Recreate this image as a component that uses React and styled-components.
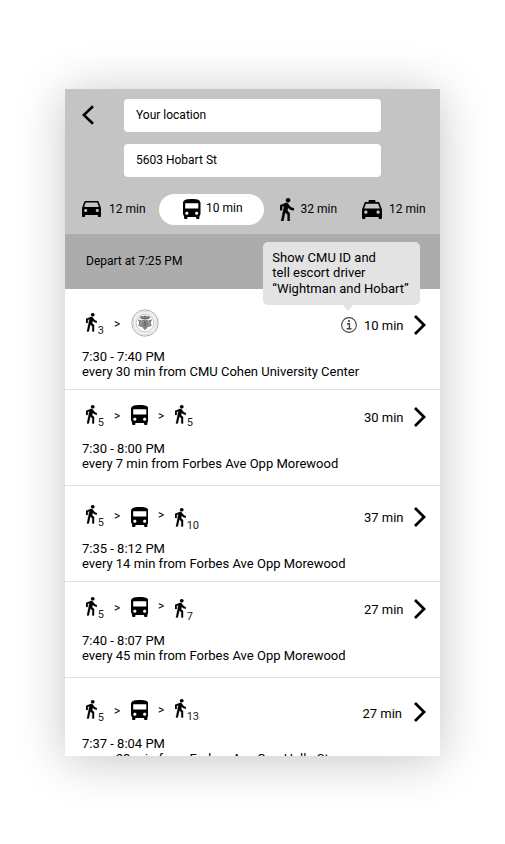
import React from "react";
import styled, { createGlobalStyle } from "styled-components";

const Global = createGlobalStyle`
  *, *::before, *::after { box-sizing: border-box; }
  body { margin: 0; background: #fff; font-family: Roboto, "Liberation Sans", sans-serif; color: #000; }
`;

const Stage = styled.div`
  width: 505px;
  height: 844px;
  padding: 89px 65px 88px;
  overflow: hidden;
`;

const Phone = styled.main`
  width: 375px;
  height: 667px;
  background: #fff;
  box-shadow: 0 4px 46px rgba(0, 0, 0, 0.23);
  overflow: hidden;
`;

const Header = styled.header`
  height: 145px;
  background: #c4c4c4;
`;

const SearchArea = styled.div`
  display: flex;
  align-items: flex-start;
  height: 105px;
  padding-top: 10px;
`;

const BackButton = styled.button`
  display: flex;
  width: 59px;
  padding: 6px 0 0 17px;
  border: 0;
  background: none;
`;

const Fields = styled.div`
  display: flex;
  flex-direction: column;
  gap: 12px;
`;

const Field = styled.div`
  width: 257px;
  height: 33px;
  padding-left: 12px;
  border-radius: 4px;
  background: #fff;
  font-size: 12px;
  line-height: 32px;
`;

const Modes = styled.nav`
  display: flex;
  align-items: flex-start;
`;

const Mode = styled.div`
  display: flex;
  align-items: center;
  flex: none;
  width: ${(p) => p.$width}px;
  height: 31px;
  padding: 0 0 ${(p) => p.$lift || 0}px ${(p) => p.$pad}px;
  gap: ${(p) => p.$gap}px;
  border-radius: 16px;
  background: ${(p) => (p.$active ? "#fff" : "transparent")};
  font-size: 12px;
  line-height: ${(p) => (p.$active ? 28 : 30)}px;
  white-space: nowrap;

  span { align-self: flex-start; }
`;

const DepartBar = styled.section`
  display: flex;
  height: 55px;
  padding-left: 21px;
  background: #acacac;
  font-size: 12px;
  line-height: 54px;
`;

const Routes = styled.ul`
  margin: 0;
  padding: 0;
  list-style: none;
`;

const Route = styled.li`
  height: ${(p) => p.$height}px;
  border-bottom: 1px solid #e0e0e0;
`;

const Summary = styled.div`
  display: flex;
  justify-content: space-between;
  height: ${(p) => p.$height}px;
  padding: 0 13px 0 20.5px;
`;

const Group = styled.div`
  display: flex;
  align-items: flex-start;
`;

const Slot = styled.div`
  display: flex;
  align-items: flex-start;
  flex: none;
  width: ${(p) => p.$width}px;
  margin-top: ${(p) => p.$top}px;
`;

const Minutes = styled.sub`
  margin: 11px 0 0 0.5px;
  color: #222;
  font-size: 11px;
  line-height: 13px;
  vertical-align: baseline;
`;

const Arrow = styled.span`
  padding-left: 0.6px;
  font-size: 12px;
  line-height: 13px;
`;

const Duration = styled.span`
  margin: ${(p) => p.$top}px ${(p) => p.$right}px 0 0;
  font-size: 13px;
  line-height: 15px;
`;

const Details = styled.p`
  margin: 0 0 0 17px;
  font-size: 13px;
  line-height: 15px;
  white-space: nowrap;
`;

const InfoAnchor = styled.div`
  position: relative;
  width: 16px;
  height: 16px;
  margin: 28px 6.6px 0 0;
`;

const Tooltip = styled.div`
  position: absolute;
  right: -63px;
  bottom: 28px;
  width: 157px;
  height: 63px;
  padding: 8px 0 0 9px;
  border-radius: 5px;
  background: #e3e3e3;
  font-size: 13px;
  line-height: 15.4px;
  white-space: nowrap;

  &::after {
    content: "";
    position: absolute;
    left: 80px;
    top: 100%;
    border: solid transparent;
    border-width: 6px 5px 0;
    border-top-color: #e3e3e3;
  }
`;

const Svg = styled.svg`
  display: block;
  flex: none;
`;

const CarIcon = () => (
  <Svg width="19" height="16" viewBox="3 5 18 16" preserveAspectRatio="none">
    <path d="M18.92 6.01C18.72 5.42 18.16 5 17.5 5h-11c-.66 0-1.21.42-1.42 1.01L3 12v8c0 .55.45 1 1 1h1c.55 0 1-.45 1-1v-1h12v1c0 .55.45 1 1 1h1c.55 0 1-.45 1-1v-8l-2.08-5.99zM6.5 16c-.83 0-1.5-.67-1.5-1.5S5.67 13 6.5 13s1.5.67 1.5 1.5S7.33 16 6.5 16zm11 0c-.83 0-1.5-.67-1.5-1.5s.67-1.5 1.5-1.5 1.5.67 1.5 1.5-.67 1.5-1.5 1.5zM5 11l1.5-4.5h11L19 11H5z" />
  </Svg>
);

const TaxiIcon = () => (
  <Svg width="20" height="19" viewBox="3 3 18 18" preserveAspectRatio="none">
    <path d="M18.92 6.01C18.72 5.42 18.16 5 17.5 5H15V3H9v2H6.5c-.66 0-1.21.42-1.42 1.01L3 12v8c0 .55.45 1 1 1h1c.55 0 1-.45 1-1v-1h12v1c0 .55.45 1 1 1h1c.55 0 1-.45 1-1v-8l-2.08-5.99zM6.5 16c-.83 0-1.5-.67-1.5-1.5S5.67 13 6.5 13s1.5.67 1.5 1.5S7.33 16 6.5 16zm11 0c-.83 0-1.5-.67-1.5-1.5s.67-1.5 1.5-1.5 1.5.67 1.5 1.5-.67 1.5-1.5 1.5zM5 11l1.5-4.5h11L19 11H5z" />
  </Svg>
);

const BusIcon = () => (
  <Svg width="17.5" height="20" viewBox="4 2 16 19" preserveAspectRatio="none">
    <path d="M4 16c0 .88.39 1.67 1 2.22V20c0 .55.45 1 1 1h1c.55 0 1-.45 1-1v-1h8v1c0 .55.45 1 1 1h1c.55 0 1-.45 1-1v-1.78c.61-.55 1-1.34 1-2.22V6c0-3.5-3.58-4-8-4s-8 .5-8 4v10zm3.5 1c-.83 0-1.5-.67-1.5-1.5S6.67 14 7.5 14s1.5.67 1.5 1.5S8.33 17 7.5 17zm9 0c-.83 0-1.5-.67-1.5-1.5s.67-1.5 1.5-1.5 1.5.67 1.5 1.5-.67 1.5-1.5 1.5zm1.5-6H6V6h12v5z" />
  </Svg>
);

const WalkIcon = ({ width = 11.7, height = 18.5 }) => (
  <Svg width={width} height={height} viewBox="6 1.5 13 21.5" preserveAspectRatio="none" stroke="#000" strokeWidth=".25">
    <path d="M13.5 5.5c1.1 0 2-.9 2-2s-.9-2-2-2-2 .9-2 2 .9 2 2 2zM9.8 8.9L7 23h2.1l1.8-8 2.1 2v6h2v-7.5l-2.1-2 .6-3C14.8 12 16.8 13 19 13v-2c-1.9 0-3.5-1-4.3-2.4l-1-1.6c-.4-.6-1-1-1.7-1-.3 0-.5.1-.8.1L6 8.3V13h2V9.6l1.8-.7" />
  </Svg>
);

const ChevronIcon = ({ back }) => (
  <Svg width="12" height="20" viewBox="0 0 12 20" fill="none" stroke="#000" strokeWidth={back ? 2.6 : 2.8}>
    <path d={back ? "M11 1.2L1.8 10L11 18.8" : "M1 1L10 10L1 19"} />
  </Svg>
);

const InfoIcon = () => (
  <Svg width="16" height="16" viewBox="0 0 16 16" fill="none" stroke="#444">
    <circle cx="8" cy="8" r="7.4" strokeWidth="1.1" />
    <path d="M6 6.8H8.4V11.6M5.7 11.8H10.5" strokeWidth="1.4" />
    <circle cx="8" cy="4.1" r="1.1" fill="#444" stroke="none" />
  </Svg>
);

const SealIcon = () => (
  <Svg width="28" height="28" viewBox="0 0 28 28" fill="none" stroke="#999">
    <circle cx="14" cy="14" r="13.2" strokeWidth=".8" />
    <circle cx="14" cy="14" r="11.8" strokeWidth=".35" />
    <circle cx="14" cy="14" r="10.4" strokeWidth=".9" strokeDasharray="1.2 1.1" stroke="#ccc" />
    <circle cx="14" cy="14" r="9" strokeWidth=".6" />
    <path d="M8.8 8.6L10.4 7L12.2 7.8L14 6.6L15.8 7.8L17.6 7L19.2 8.6L17.4 10H10.6Z" fill="#777" stroke="#555" strokeWidth=".4" />
    <path d="M7.6 10.8L10.4 12L14 10.8L17.6 12L20.4 10.8L19.2 14L20.2 16.6L16.8 17.4L14 20.8L11.2 17.4L7.8 16.6L8.8 14Z" fill="#999" stroke="#666" strokeWidth=".8" />
    <path d="M10.6 15.4L14 12.8L17.4 15.4M14 12V19M11.8 17L14 15.4L16.2 17" stroke="#555" strokeWidth=".8" />
  </Svg>
);

const routes = [
  {
    height: 101, textTop: 60, walk: [24, 3], arrow: 29,
    duration: "10 min", durationTop: 29, durationRight: 10.5, chevron: 26,
    time: "7:30 - 7:40 PM", line: "every 30 min from CMU Cohen University Center", escort: true,
  },
  {
    height: 96, textTop: 51, walk: [15, 5], arrow: 20, bus: 15, arrow2: 20, walk2: [15, 5],
    duration: "30 min", durationTop: 20, durationRight: 10.5, chevron: 17,
    time: "7:30 - 8:00 PM", line: "every 7 min from Forbes Ave Opp Morewood",
  },
  {
    height: 96, textTop: 55, walk: [19, 5], arrow: 24, bus: 21, arrow2: 23, walk2: [22, 10],
    duration: "37 min", durationTop: 24, durationRight: 10.5, chevron: 21,
    time: "7:35 - 8:12 PM", line: "every 14 min from Forbes Ave Opp Morewood",
  },
  {
    height: 96, textTop: 51, walk: [15, 5], arrow: 20, bus: 15, arrow2: 18, walk2: [17, 7],
    duration: "27 min", durationTop: 20, durationRight: 10.5, chevron: 17,
    time: "7:40 - 8:07 PM", line: "every 45 min from Forbes Ave Opp Morewood",
  },
  {
    height: 96, textTop: 58, walk: [22, 5], arrow: 27, bus: 22, arrow2: 26, walk2: [21, 13],
    duration: "27 min", durationTop: 28, durationRight: 12, chevron: 24,
    time: "7:37 - 8:04 PM", line: "every 23 min from Forbes Ave Opp Halla St",
  },
];

const WalkStep = ({ top, minutes, width }) => (
  <Slot $top={top} $width={width}>
    <WalkIcon />
    <Minutes>{minutes}</Minutes>
  </Slot>
);

const RouteItem = ({ route: r }) => (
  <Route $height={r.height}>
    <Summary $height={r.textTop}>
      <Group>
        <WalkStep top={r.walk[0]} minutes={r.walk[1]} width={28} />
        <Slot $top={r.arrow} $width={17}><Arrow>&gt;</Arrow></Slot>
        {r.escort ? (
          <Slot $top={19.7} $width={28}><SealIcon /></Slot>
        ) : (
          <>
            <Slot $top={r.bus} $width={27}><BusIcon /></Slot>
            <Slot $top={r.arrow2} $width={17}><Arrow>&gt;</Arrow></Slot>
            <WalkStep top={r.walk2[0]} minutes={r.walk2[1]} width={30} />
          </>
        )}
      </Group>
      <Group>
        {r.escort && (
          <InfoAnchor>
            <InfoIcon />
            <Tooltip>
              Show CMU ID and<br />tell escort driver<br />“Wightman and Hobart”
            </Tooltip>
          </InfoAnchor>
        )}
        <Duration $top={r.durationTop} $right={r.durationRight}>{r.duration}</Duration>
        <Slot $top={r.chevron} $width={13}><ChevronIcon /></Slot>
      </Group>
    </Summary>
    <Details>{r.time}<br />{r.line}</Details>
  </Route>
);

export default function App() {
  return (
    <Stage>
      <Global />
      <Phone>
        <Header>
          <SearchArea>
            <BackButton aria-label="Back"><ChevronIcon back /></BackButton>
            <Fields>
              <Field>Your location</Field>
              <Field>5603 Hobart St</Field>
            </Fields>
          </SearchArea>
          <Modes>
            <Mode $width={94} $pad={17} $gap={8} $lift={1}><CarIcon /><span>12 min</span></Mode>
            <Mode $active $width={105} $pad={24} $gap={5.5} $lift={1}><BusIcon /><span>10 min</span></Mode>
            <Mode $width={98} $pad={15.5} $gap={7}><WalkIcon width={14} height={23} /><span>32 min</span></Mode>
            <Mode $width={78} $pad={0} $gap={7}><TaxiIcon /><span>12 min</span></Mode>
          </Modes>
        </Header>
        <DepartBar>Depart at 7:25 PM</DepartBar>
        <Routes>
          {routes.map((r) => <RouteItem key={r.time} route={r} />)}
        </Routes>
      </Phone>
    </Stage>
  );
}
